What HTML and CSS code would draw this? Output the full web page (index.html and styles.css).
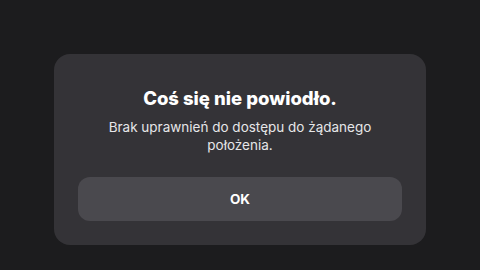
FILE: index.html
```html
<!DOCTYPE html>
<html lang="pl">

<head>
    <meta charset="UTF-8" />
    <meta name="viewport" content="width=device-width, initial-scale=1.0" />
    <title>Błąd</title>
    <link rel="stylesheet" href="styles.css">
</head>

<body>

    <!-- Okno błędu -->
    <div class="dialog">
        <h1 class="dialog-title">Coś się nie powiodło.</h1>
        <p class="dialog-text">Brak uprawnień do dostępu do żądanego położenia.</p>
        <button class="dialog-btn">OK</button>
    </div>

</body>

</html>
```

FILE: styles.css
```css
* {
    box-sizing: border-box;
}

body {
    width: 100%;
    height: 100vh;
    margin: 0;
    background-color: #1c1c1e;
    font-family: Inter, "Noto Sans", sans-serif;
    display: flex;
    justify-content: center;
    padding-top: 54px;
    overflow: hidden;
}

.dialog {
    width: 372px;
    height: 191px;
    background-color: #343337;
    border-radius: 16px;
    padding: 32px 24px 24px;
    display: flex;
    flex-direction: column;
    align-items: center;
    text-align: center;
}

.dialog-title {
    margin: 0;
    font-size: 18.5px;
    font-weight: 800;
    line-height: 24px;
    color: #ffffff;
}

.dialog-text {
    margin: 8px 0 0;
    width: 290px;
    font-size: 13.5px;
    line-height: 18px;
    color: #e6e6e8;
}

.dialog-btn {
    margin-top: auto;
    width: 100%;
    height: 44px;
    border: none;
    border-radius: 12px;
    background-color: #4a494e;
    color: #ffffff;
    font-family: inherit;
    font-size: 13.5px;
    font-weight: 700;
    cursor: pointer;
}
```
